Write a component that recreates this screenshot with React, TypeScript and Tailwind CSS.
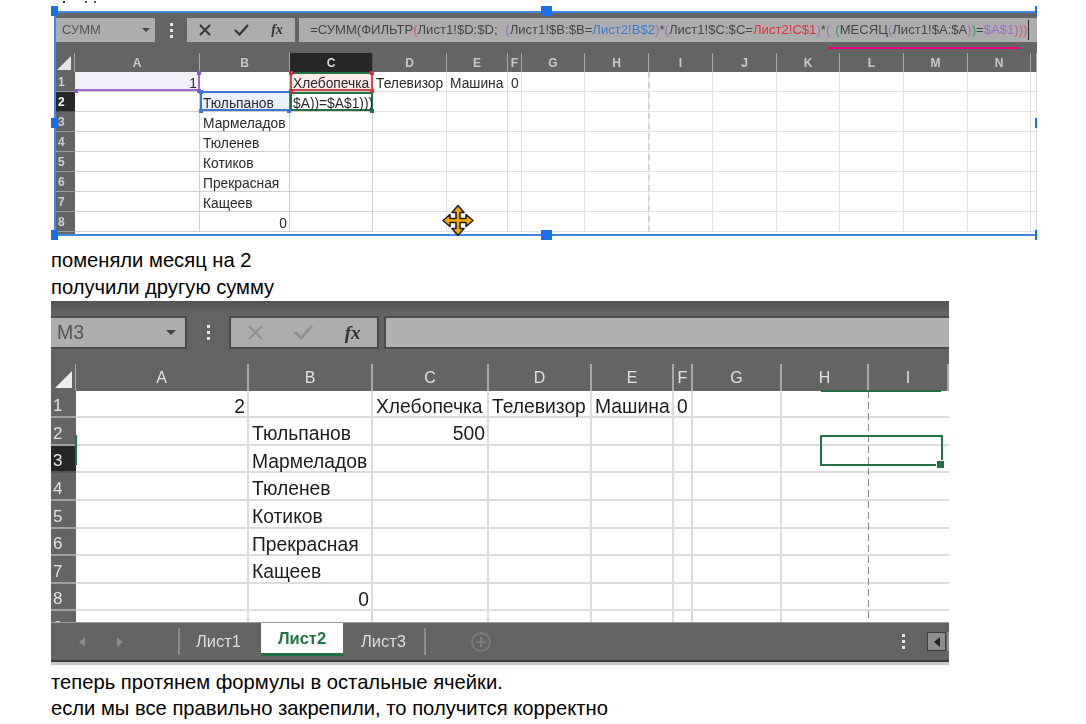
import React from 'react';

const topCols = [125, 90, 83, 74, 61, 14, 63, 64, 64, 64, 63, 64, 64, 63, 6];
const topLetters = ['A', 'B', 'C', 'D', 'E', 'F', 'G', 'H', 'I', 'J', 'K', 'L', 'M', 'N', ''];
const topRows = [
  ['1', '', 'Хлебопечка', 'Телевизор', 'Машина', '0'],
  ['', 'Тюльпанов', '$A))=$A$1)))'],
  ['', 'Мармеладов'],
  ['', 'Тюленев'],
  ['', 'Котиков'],
  ['', 'Прекрасная'],
  ['', 'Кащеев'],
  ['', '0'],
];

const bottomLetters = ['A', 'B', 'C', 'D', 'E', 'F', 'G', 'H', 'I'];
const bottomRows = [
  ['2', '', 'Хлебопечка', 'Телевизор', 'Машина', '0'],
  ['', 'Тюльпанов', '500'],
  ['', 'Мармеладов'],
  ['', 'Тюленев'],
  ['', 'Котиков'],
  ['', 'Прекрасная'],
  ['', 'Кащеев'],
  ['', '0'],
];

const isNumberCell = (text: string, col: number) => /^\d+$/.test(text) && col !== 5;

const Dots = () => (
  <div className="flex flex-col items-center gap-[3px]">
    <span className="size-[3px] bg-[#e8e8e8]" />
    <span className="size-[3px] bg-[#e8e8e8]" />
    <span className="size-[3px] bg-[#e8e8e8]" />
  </div>
);

const Corner = ({ className }: { className: string }) => (
  <span className={`absolute size-[4px] z-10 ${className}`} />
);

const Handle = ({ className }: { className: string }) => (
  <span className={`absolute bg-[#1a6fe6] z-20 ${className}`} />
);

const Formula = () => (
  <div className="flex-1 min-w-0 overflow-hidden h-[24px] ml-[4px] bg-[#adadad] flex items-center pl-[11px] text-[13.1px] text-[#444] whitespace-nowrap font-['Liberation_Sans',sans-serif]">
    <span>=СУММ(ФИЛЬТР</span>
    <span className="text-[#d9527a]">(</span>
    <span>Лист1!$D:$D;&nbsp; </span>
    <span className="text-[#9a6cc8] ml-[4px]">(</span>
    <span>Лист1!$B:$B=</span>
    <span className="text-[#3a78d0]">Лист2!B$2</span>
    <span className="text-[#9a6cc8]">)</span>
    <span>*</span>
    <span className="text-[#9a6cc8]">(</span>
    <span>Лист1!$C:$C=</span>
    <span className="text-[#d8323c]">Лист2!C$1</span>
    <span className="text-[#9a6cc8]">)</span>
    <span>*</span>
    <span className="text-[#9a6cc8]">(</span>
    <span className="text-[#2b9a5a] ml-[5px]">(</span>
    <span>МЕСЯЦ</span>
    <span className="text-[#9a6cc8]">(</span>
    <span>Лист1!$A:$A</span>
    <span className="text-[#9a6cc8]">)</span>
    <span className="text-[#2b9a5a]">)</span>
    <span>=</span>
    <span className="text-[#9a6cc8]">$A$1</span>
    <span className="text-[#d9527a]">)))</span>
    <span className="w-px h-[20px] bg-[#222] ml-[1px]" />
  </div>
);

// coloured reference boxes while the formula in C2 is being edited
const TopCellMarks = ({ r, c }: { r: number; c: number }) => {
  if (r === 0 && c === 0) {
    return (
      <>
        <span className="absolute inset-0 -right-px bg-[#f3eff8] border-r-2 border-b-2 border-[#9a6cc8]" />
        <Corner className="-right-[2px] -top-px bg-[#8a5cc0]" />
        <Corner className="-right-[2px] -bottom-[2px] bg-[#8a5cc0]" />
        <Corner className="-left-[1px] -bottom-[2px] bg-[#8a5cc0]" />
      </>
    );
  }
  if (r === 1 && c === 1) {
    return (
      <>
        <span className="absolute inset-0 -top-px -right-px bg-[#e9f0fa] border-2 border-r border-[#3a78d0]" />
        <Corner className="-left-[1px] -top-[2px] bg-[#3a78d0]" />
        <Corner className="-left-[1px] -bottom-[2px] bg-[#3a78d0]" />
        <Corner className="-right-[2px] -bottom-[2px] bg-[#3a78d0]" />
      </>
    );
  }
  if (r === 0 && c === 2) {
    return (
      <>
        <span className="absolute inset-0 -right-px bg-[#fbeaea] border-x-2 border-[#d8464c] border-t-2 border-t-[#217346] border-b-2 border-b-[#c94a4a]" />
        <Corner className="-left-[1px] -top-[1px] bg-[#d8323c]" />
        <Corner className="-right-[2px] -top-[1px] bg-[#d8323c]" />
        <Corner className="-left-[1px] -bottom-[2px] bg-[#d8323c]" />
        <Corner className="-right-[2px] -bottom-[2px] bg-[#d8323c]" />
      </>
    );
  }
  if (r === 1 && c === 2) {
    return (
      <>
        <span className="absolute inset-0 -right-px border-2 border-[#217346] bg-white" />
        <Corner className="-right-[2px] -bottom-[2px] bg-[#217346]" />
      </>
    );
  }
  return null;
};

const TopSheet = () => (
  <div className="relative w-[983px] h-[225px] ml-[54px] mt-[11px] overflow-hidden">
    <div className="h-full border-y-2 border-l-2 border-[#3f87e0] overflow-hidden">
      <div className="blur-[0.5px] bg-white font-['Liberation_Sans',sans-serif]">
        <div className="h-[40px] bg-[#646464] flex items-start pt-[5px]">
          <div className="w-[99px] shrink-0 h-[24px] bg-[#adadad] flex items-center justify-between pl-[6px] pr-[5px] text-[13px] text-[#555]">
            <span>СУММ</span>
            <span className="w-0 h-0 border-x-[4px] border-x-transparent border-t-[4px] border-t-[#444]" />
          </div>
          <div className="w-[32px] shrink-0 h-[24px] flex items-center justify-center">
            <Dots />
          </div>
          <div className="w-[108px] shrink-0 h-[24px] bg-[#adadad] grid grid-cols-3 items-center justify-items-center text-[#333]">
            <svg width="12" height="12" viewBox="0 0 12 12" stroke="currentColor" strokeWidth="1.8"><path d="M1 1l10 10M11 1L1 11" /></svg>
            <svg width="15" height="12" viewBox="0 0 15 12" fill="none" stroke="currentColor" strokeWidth="2"><path d="M1 6l4.5 4.5L14 1" /></svg>
            <span className="font-['Liberation_Serif',serif] italic font-bold text-[14px] leading-none">fx</span>
          </div>
          <Formula />
        </div>
        <div className="relative">
          <div className="grid grid-cols-[19px_125px_90px_83px_74px_61px_14px_63px_64px_64px_64px_63px_64px_64px_63px_6px] grid-rows-[19px_repeat(8,20px)_2px] text-[13.8px] text-[#2a2a2a]">
            <div className="bg-[#646464] flex items-end justify-end pr-[3px] pb-[2px] border-r border-[#a8a8a8]">
              <span className="w-0 h-0 border-l-[14px] border-l-transparent border-b-[14px] border-b-[#e6e6e6]" />
            </div>
            {topLetters.map((letter, i) => (
              <div
                key={i}
                className={`flex items-center justify-center text-[12px] font-bold ${i === 2 ? 'bg-[#262626] text-[#d8d8d8] border-r border-[#555]' : 'bg-[#646464] text-[#c9c9c9] border-r border-[#a8a8a8]'}`}
              >
                {letter}
              </div>
            ))}
            {topRows.map((row, r) => (
              <React.Fragment key={r}>
                <div className={`flex items-center pl-[2px] text-[12px] font-bold border-b ${r === 1 ? 'bg-[#262626] text-white border-[#555]' : 'bg-[#646464] text-[#cfcfcf] border-[#9a9a9a]'}`}>
                  {r + 1}
                </div>
                {topCols.map((_, c) => (
                  <div key={c} className={`relative flex items-center pt-[5px] border-b whitespace-nowrap ${c === 0 || c === 1 || c === 2 ? 'border-r border-[#cfcfcf]' : 'border-r border-[#e2e2e2]'} ${isNumberCell(row[c] ?? '', c) ? 'justify-end pr-[2px]' : 'pl-[3px]'}`}>
                    <TopCellMarks r={r} c={c} />
                    <span className="relative z-10">{row[c] ?? ''}</span>
                  </div>
                ))}
              </React.Fragment>
            ))}
            <div className="bg-[#646464]" />
          </div>
          {/* page break marker */}
          <div className="absolute left-[592px] top-[19px] h-[160px] border-l-2 border-dashed border-[#d4d4d4]" />
        </div>
      </div>
    </div>

    <div className="absolute left-[774px] top-[36px] w-[191px] h-[2px] bg-[#e6007e]" />

    <svg className="absolute left-[388px] top-[193px] z-20" width="32" height="33" viewBox="0 0 32 32">
      <path d="M16 1L22 8H18V14H24V10L31 16L24 22V18H18V24H22L16 31L10 24H14V18H8V22L1 16L8 10V14H14V8H10Z" fill="#f5a900" stroke="#222" strokeWidth="1.6" strokeLinejoin="round" />
    </svg>
  </div>
);

const TopHandles = () => (
  <>
    <Handle className="left-[51px] top-[6px] w-[7px] h-[10px]" />
    <Handle className="left-[541px] top-[6px] w-[11px] h-[10px]" />
    <Handle className="left-[1035px] top-[6px] w-[2px] h-[10px]" />
    <Handle className="left-[51px] top-[118px] w-[7px] h-[10px]" />
    <Handle className="left-[1035px] top-[118px] w-[2px] h-[10px]" />
    <Handle className="left-[51px] top-[230px] w-[7px] h-[10px]" />
    <Handle className="left-[541px] top-[230px] w-[11px] h-[10px]" />
    <Handle className="left-[1035px] top-[230px] w-[2px] h-[10px]" />
    {/* tails of the line cropped off above the picture */}
    <span className="absolute left-[63px] top-[1px] size-[2px] bg-[#333]" />
    <span className="absolute left-[85px] top-[1px] size-[2px] bg-[#555]" />
    <span className="absolute left-[94px] top-[1px] size-[2px] bg-[#555]" />
  </>
);

const BottomSheet = () => (
  <div className="relative w-[898px] h-[364px] ml-[51px] overflow-hidden bg-white font-['Liberation_Sans',sans-serif] blur-[0.3px]">
    <div className="h-[63px] bg-[#646464] bg-gradient-to-b from-[#545454] to-[#646464] to-[20%] pt-[15px] flex items-start">
      <div className="w-[136px] h-[33px] bg-[#adadad] border-y-2 border-r-2 border-[#4c4c4c] flex items-center justify-between pl-[6px] pr-[9px] text-[19.5px] text-[#555]">
        <span>M3</span>
        <span className="w-0 h-0 border-x-[5px] border-x-transparent border-t-[5px] border-t-[#444]" />
      </div>
      <div className="w-[42px] h-[33px] flex items-center justify-center">
        <Dots />
      </div>
      <div className="w-[150px] h-[33px] bg-[#adadad] border-2 border-[#4c4c4c] grid grid-cols-3 items-center justify-items-center">
        <svg width="15" height="15" viewBox="0 0 15 15" stroke="#8f8f8f" strokeWidth="2"><path d="M1 1l13 13M14 1L1 14" /></svg>
        <svg width="19" height="15" viewBox="0 0 19 15" fill="none" stroke="#8f8f8f" strokeWidth="2.6"><path d="M1 7l6 6L18 1" /></svg>
        <span className="font-['Liberation_Serif',serif] italic font-bold text-[19px] leading-none text-[#333]">fx</span>
      </div>
      <div className="flex-1 h-[33px] ml-[5px] bg-[#b0b0b0] border-y-2 border-l-2 border-[#4c4c4c]" />
    </div>

    <div className="relative">
      <div className="grid grid-cols-[25px_173px_124px_116px_103px_82px_19px_89px_87px_80px] grid-rows-[27px_27px_28px_27px_28px_28px_27px_28px_27px_11px] text-[19.3px] text-[#1c1c1c] overflow-hidden">
        <div className="bg-[#646464] flex items-end justify-end pr-[3px] pb-[3px] border-r border-[#a8a8a8]">
          <span className="w-0 h-0 border-l-[17px] border-l-transparent border-b-[17px] border-b-[#eeeeee]" />
        </div>
        {bottomLetters.map((letter) => (
          <div key={letter} className="bg-[#646464] flex items-center justify-center text-[#e2e2e2] text-[16px] border-r-2 border-[#a8a8a8]">
            {letter}
          </div>
        ))}
        {bottomRows.map((row, r) => (
          <React.Fragment key={r}>
            <div className={`flex items-center pl-[2px] pt-[5px] text-[17px] border-b-2 ${r === 2 ? 'bg-[#262626] text-[#e8e8e8] border-[#555]' : 'bg-[#646464] text-[#e2e2e2] border-[#a0a0a0]'}`}>
              {r + 1}
            </div>
            {bottomLetters.map((letter, c) => (
              <div key={letter} className={`flex items-center pt-[7px] border-b-2 border-[#dcdcdc] whitespace-nowrap ${c === 7 || c === 8 ? '' : 'border-r-2'} ${isNumberCell(row[c] ?? '', c) ? 'justify-end pr-[2px]' : 'pl-[3px]'}`}>
                {row[c] ?? ''}
              </div>
            ))}
          </React.Fragment>
        ))}
        <div className="bg-[#646464] text-[#e2e2e2] text-[17px] pl-[2px] pt-[8px] leading-none">9</div>
        {bottomLetters.map((letter, c) => (
          <div key={letter} className={c < 7 ? 'border-r-2 border-[#dcdcdc]' : ''} />
        ))}
      </div>
      {/* page break and selected cell */}
      <div className="absolute left-[817px] top-[27px] w-px h-[231px] bg-[repeating-linear-gradient(to_bottom,#888_0,#888_7px,transparent_7px,transparent_11px)]" />
      <div className="absolute left-[770px] top-[26px] w-[120px] h-[2px] bg-[#217346]" />
      <div className="absolute left-[769px] top-[71px] w-[123px] h-[31px] border-2 border-[#217346]" />
      <div className="absolute left-[886px] top-[97px] size-[7px] bg-[#217346] outline outline-white" />
      <div className="absolute left-[24px] top-[71px] w-[2px] h-[30px] bg-[#217346]" />
    </div>

    <div className="h-[40px] bg-[#646464] border-t border-[#999] border-b-2 border-b-[#3c3c3c] flex items-center text-[16.5px] text-[#dedede]">
      <div className="w-[127px] shrink-0 flex items-center pl-[28px] gap-[32px]">
        <span className="w-0 h-0 border-y-[5px] border-y-transparent border-r-[6px] border-r-[#8c8c8c]" />
        <span className="w-0 h-0 border-y-[5px] border-y-transparent border-l-[6px] border-l-[#8c8c8c]" />
      </div>
      <div className="h-[27px] border-l-2 border-[#8c8c8c] w-[83px] shrink-0 flex items-center justify-center pr-[4px]">Лист1</div>
      <div className="h-[33px] self-start w-[82px] shrink-0 bg-white border-b-[3px] border-[#217346] flex items-center justify-center font-bold text-[#217346]">Лист2</div>
      <div className="w-[81px] shrink-0 flex items-center justify-center">Лист3</div>
      <div className="h-[27px] border-l-2 border-[#8c8c8c] w-[67px] shrink-0 flex items-center justify-end">
        <svg width="20" height="20" viewBox="0 0 20 20" fill="none" stroke="#7c7c7c" strokeWidth="2"><circle cx="10" cy="10" r="9" /><path d="M10 5v10M5 10h10" /></svg>
      </div>
      <div className="flex-1 flex items-center justify-end">
        <Dots />
        <div className="ml-[22px] w-[19px] h-[19px] bg-[#8f8f8f] border border-[#3c3c3c] flex items-center justify-center">
          <span className="w-0 h-0 border-y-[5px] border-y-transparent border-r-[6px] border-r-[#222]" />
        </div>
        <div className="ml-px w-[2px] h-[19px] bg-[#8f8f8f]" />
      </div>
    </div>
    <div className="h-[3px] bg-[#c8c8c8]" />
  </div>
);

export default function App() {
  return (
    <div className="relative w-[1086px] h-[724px] bg-white overflow-hidden font-['Liberation_Sans',sans-serif] text-black">
      <TopSheet />
      <TopHandles />
      <div className="ml-[51px] mt-[11px] text-[20.2px] leading-[27px]">
        <p>поменяли месяц на 2</p>
        <p>получили другую сумму</p>
      </div>
      <BottomSheet />
      <div className="ml-[51px] mt-[4px] text-[20.2px] leading-[26px]">
        <p>теперь протянем формулы в остальные ячейки.</p>
        <p>если мы все правильно закрепили, то получится корректно</p>
      </div>
    </div>
  );
}
